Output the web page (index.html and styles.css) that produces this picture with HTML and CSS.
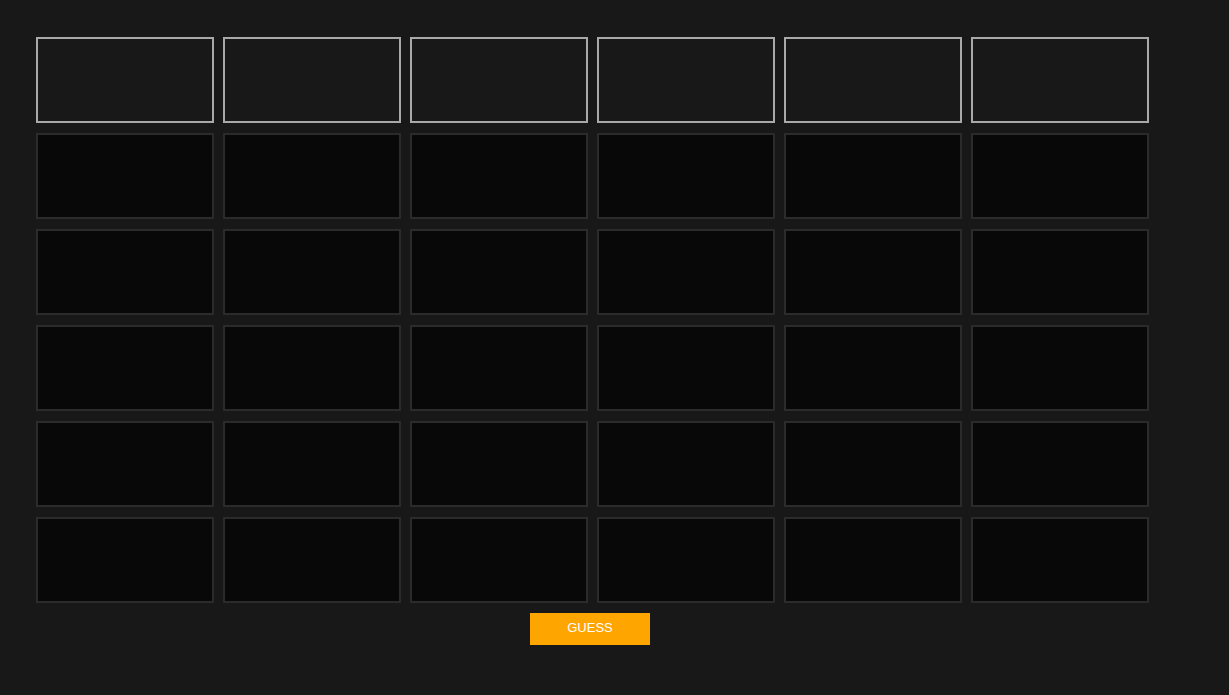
FILE: index.html
```html
<!DOCTYPE html>
<html>
<head>
<meta charset="utf-8">
<link rel="stylesheet" href="styles.css">
</head>
<body>
<div class="game">
  <div class="board">
    <div class="cell active"></div><div class="cell active"></div><div class="cell active"></div><div class="cell active"></div><div class="cell active"></div><div class="cell active"></div>
    <div class="cell"></div><div class="cell"></div><div class="cell"></div><div class="cell"></div><div class="cell"></div><div class="cell"></div>
    <div class="cell"></div><div class="cell"></div><div class="cell"></div><div class="cell"></div><div class="cell"></div><div class="cell"></div>
    <div class="cell"></div><div class="cell"></div><div class="cell"></div><div class="cell"></div><div class="cell"></div><div class="cell"></div>
    <div class="cell"></div><div class="cell"></div><div class="cell"></div><div class="cell"></div><div class="cell"></div><div class="cell"></div>
    <div class="cell"></div><div class="cell"></div><div class="cell"></div><div class="cell"></div><div class="cell"></div><div class="cell"></div>
  </div>
  <button class="guess">GUESS</button>
</div>
</body>
</html>
```
FILE: styles.css
```css
html, body {
  margin: 0;
  padding: 0;
  background: #181818;
  height: 100%;
  overflow: hidden;
}
body {
  font-family: "Liberation Sans", Arial, sans-serif;
}
.game {
  padding: 37px 0 0 36px;
  display: flex;
  flex-direction: column;
  align-items: flex-start;
}
.board {
  display: grid;
  grid-template-columns: repeat(6, 178px);
  grid-auto-rows: 86px;
  column-gap: 9px;
  row-gap: 10px;
}
.cell {
  box-sizing: border-box;
  border: 2px solid #2b2b2b;
  background: #080808;
}
.cell.active {
  border-color: #a9a9a9;
  background: #181818;
}
.guess {
  margin: 10px 0 0 494px;
  width: 120px;
  height: 32px;
  border: none;
  background: #ffa500;
  color: #ffffff;
  font-family: "Liberation Sans", Arial, sans-serif;
  font-size: 13px;
  line-height: 30px;
  padding: 0 0 2px 0;
  cursor: pointer;
}
```
